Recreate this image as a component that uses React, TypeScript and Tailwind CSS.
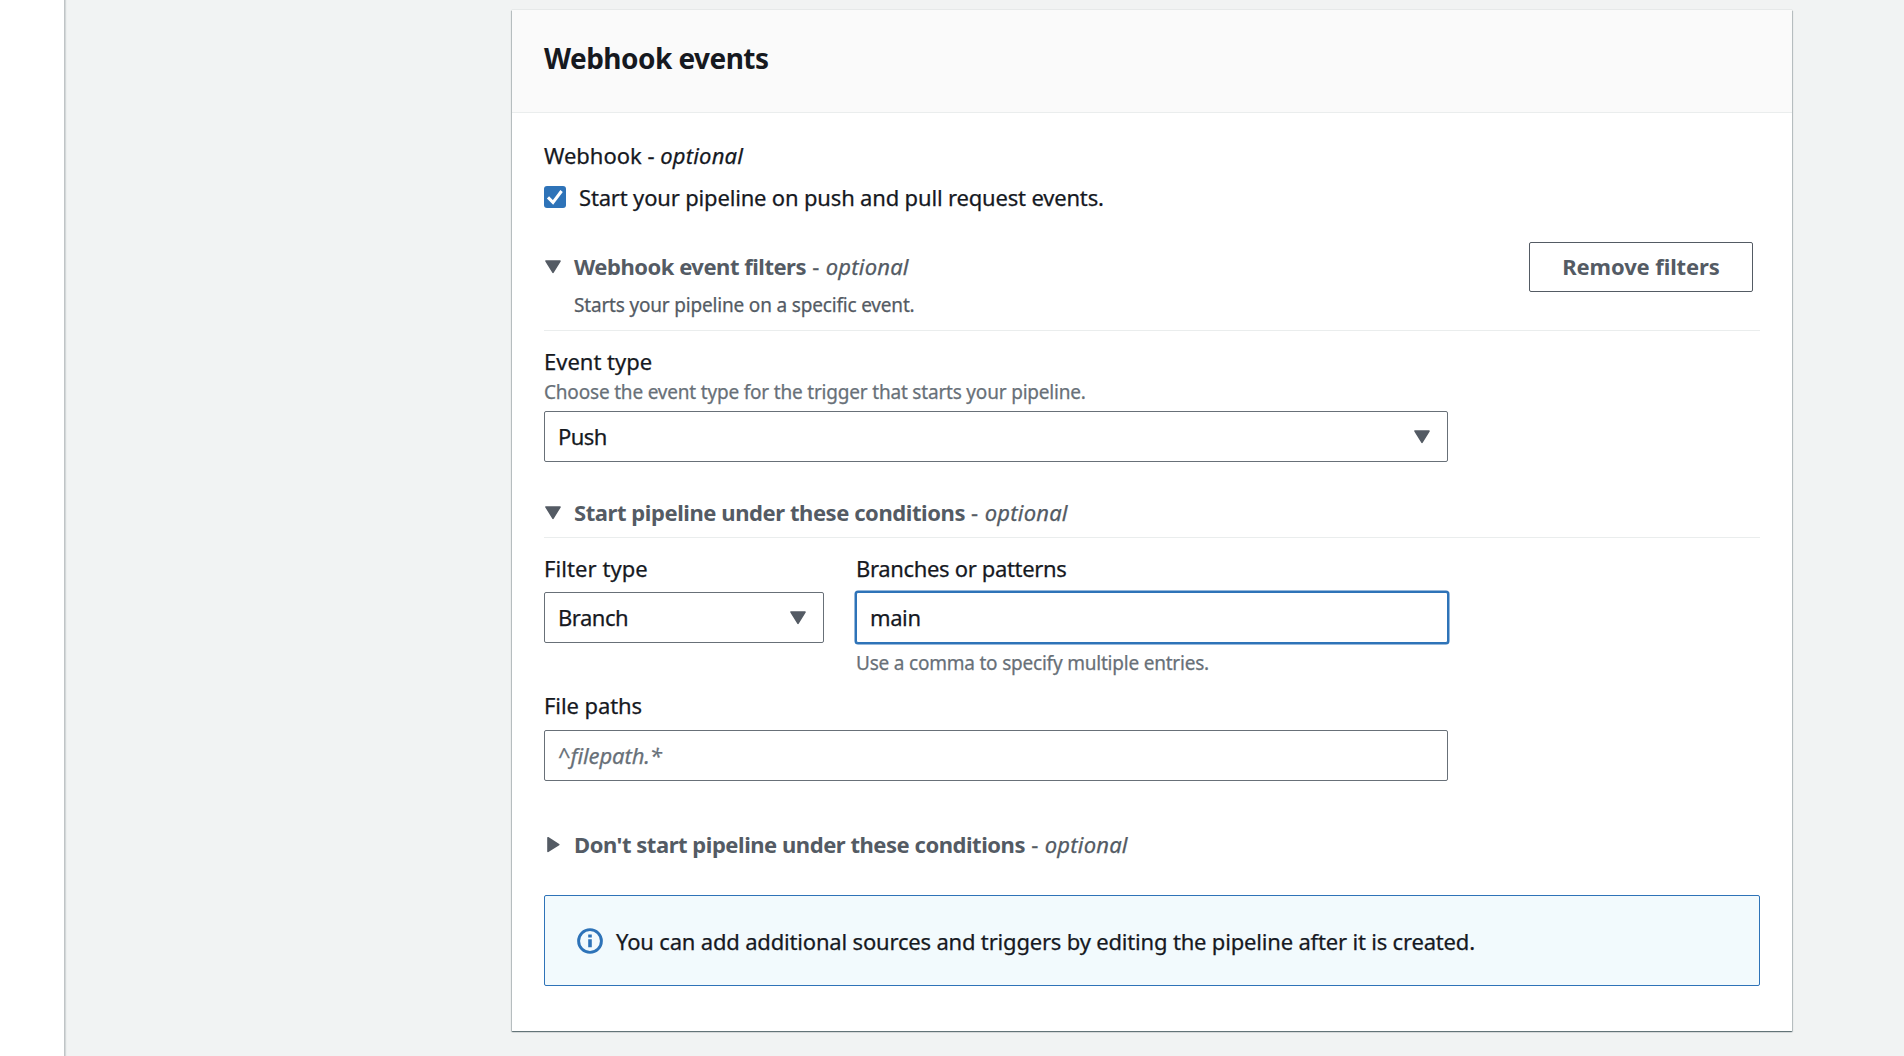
import type { ReactNode } from "react";

function Caret({ direction = "down" }: { direction?: "down" | "right" }) {
  return (
    <svg width="18" height="18" viewBox="0 0 18 18" className="shrink-0" aria-hidden="true">
      <path
        d={direction === "down" ? "M2 4H16L9 15.4Z" : "M4 2.8V16.4L14.8 9.6Z"}
        fill="#545b64"
        stroke="#545b64"
        strokeWidth="1.6"
        strokeLinejoin="round"
      />
    </svg>
  );
}

function InfoIcon() {
  return (
    <svg width="26" height="26" viewBox="0 0 26 26" fill="none" className="shrink-0" aria-hidden="true">
      <circle cx="13" cy="13" r="11.4" stroke="#2e73b8" strokeWidth="2.9" />
      <path d="M11.2 6.6h3.6v2.9h-3.6zM11.2 11.2h3.6v8.1h-3.6z" fill="#2e73b8" />
    </svg>
  );
}

function SectionTitle({
  open,
  tracking,
  children,
}: {
  open: boolean;
  tracking: string;
  children: ReactNode;
}) {
  return (
    <div className="flex h-7 items-center text-[#545b64]">
      <Caret direction={open ? "down" : "right"} />
      <h3 className="ml-3 whitespace-pre font-normal">
        <span className={`font-bold [-webkit-text-stroke:0px] ${tracking}`}>{children}</span>
        <span className="tracking-[0.4px]"> - </span>
        <span className="italic tracking-[0.2px]">optional</span>
      </h3>
    </div>
  );
}

function Select({ value, className = "", tracking }: { value: string; className?: string; tracking: string }) {
  return (
    <div
      className={`flex h-[51px] items-center justify-between rounded-[2px] border border-[#687078] bg-white pb-px pl-[13px] pr-[16px] ${className}`}
    >
      <span className={tracking}>{value}</span>
      <Caret />
    </div>
  );
}

export default function App() {
  return (
    <div className="flex h-[1056px] w-[1904px] overflow-hidden bg-[#f1f3f3] font-['Noto_Sans',sans-serif] text-[22px] leading-7 text-[#16191f] [-webkit-text-stroke:0.25px]">
      <aside className="w-[65px] shrink-0 border-r border-[#c0c4c6] bg-white shadow-[1px_0_1px_0_rgba(0,28,36,0.12)]" />

      <main className="flex-1 pl-[447px] pt-[10px]">
        <section className="h-[1021px] w-[1280px] bg-white shadow-[0_1px_1px_0_rgba(0,28,36,0.4),1px_1px_1px_0_rgba(0,28,36,0.15),-1px_1px_1px_0_rgba(0,28,36,0.15),0_0_1px_0_rgba(0,28,36,0.25)]">
          <header className="h-[103px] border-b border-[#eaeded] bg-[#fafafa] px-8 pt-[30px]">
            <h2 className="text-[28px] font-bold leading-9 tracking-[-0.54px] [-webkit-text-stroke:0px]">
              Webhook events
            </h2>
          </header>

          <div className="flex flex-col px-8 pt-7">
            <div className="whitespace-pre">
              <span className="tracking-[-0.03px]">Webhook - </span>
              <span className="italic tracking-[0.2px]">optional</span>
            </div>
            <label className="mt-[14px] flex items-center">
              <span className="flex h-[22px] w-[22px] items-center justify-center rounded-[3px] bg-[#2e73b8]">
                <svg width="22" height="22" viewBox="0 0 22 22" fill="none" aria-hidden="true">
                  <path d="M4 11.4L9 16.4L17.6 5" stroke="#fff" strokeWidth="3" />
                </svg>
              </span>
              <span className="ml-[13px] tracking-[-0.17px]">
                Start your pipeline on push and pull request events.
              </span>
            </label>

            <div className="mt-[31px] flex h-[89px] items-start justify-between border-b border-[#eaeded]">
              <div className="pt-[10px]">
                <SectionTitle open tracking="tracking-[-0.485px]">
                  Webhook event filters
                </SectionTitle>
                <p className="ml-[30px] mt-[13px] text-[19px] leading-6 tracking-[-0.178px] text-[#545b64]">
                  Starts your pipeline on a specific event.
                </p>
              </div>
              <button className="mr-[7px] flex h-[50px] w-[224px] items-center justify-center rounded-[2px] border border-[#545b64] pb-0.5 font-bold tracking-[-0.1px] text-[#545b64] [-webkit-text-stroke:0px]">
                Remove filters
              </button>
            </div>

            <div className="mt-4">Event type</div>
            <p className="mt-[5px] text-[19px] leading-6 tracking-[-0.19px] text-[#687078]">
              Choose the event type for the trigger that starts your pipeline.
            </p>
            <Select value="Push" className="mt-[7px] w-[904px]" tracking="tracking-[-0.6px]" />

            <div className="mt-9 h-10 border-b border-[#eaeded]">
              <SectionTitle open tracking="tracking-[-0.431px]">
                Start pipeline under these conditions
              </SectionTitle>
            </div>

            <div className="mt-4 flex gap-8">
              <div className="w-[280px]">
                <div className="tracking-[0.07px]">Filter type</div>
                <Select value="Branch" className="mt-[10px]" tracking="tracking-[-0.5px]" />
              </div>
              <div className="w-[592px]">
                <div className="tracking-[-0.336px]">Branches or patterns</div>
                <div className="mt-[10px] flex h-[51px] items-center rounded-[2px] border border-[#2e73b8] bg-white px-[13px] pb-px tracking-[-0.4px] shadow-[0_0_0_1.5px_#2e73b8]">
                  main
                </div>
                <p className="mt-2 text-[19px] leading-6 tracking-[-0.21px] text-[#687078]">
                  Use a comma to specify multiple entries.
                </p>
              </div>
            </div>

            <div className="mt-4 tracking-[-0.08px]">File paths</div>
            <div className="mt-[11px] flex h-[51px] w-[904px] items-center rounded-[2px] border border-[#687078] bg-white px-[13px] pb-px italic tracking-[-0.1px] text-[#687078]">
              ^filepath.*
            </div>

            <div className="mt-[49px]">
              <SectionTitle open={false} tracking="tracking-[-0.463px]">
                Don't start pipeline under these conditions
              </SectionTitle>
            </div>

            <div className="mt-[37px] flex h-[91px] items-center rounded-[2px] border border-[#2e73b8] bg-[#f2fafd] pl-8">
              <InfoIcon />
              <span className="ml-[13px] tracking-[-0.18px]">
                You can add additional sources and triggers by editing the pipeline after it is created.
              </span>
            </div>
          </div>
        </section>
      </main>
    </div>
  );
}
